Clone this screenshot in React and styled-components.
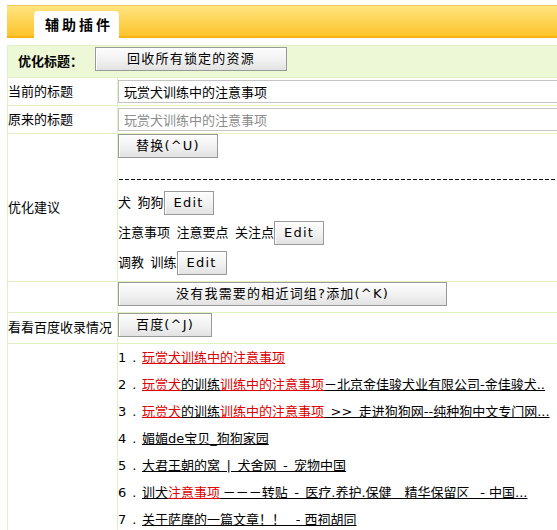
import React from "react";
import styled, { createGlobalStyle } from "styled-components";

const FONT = `"DejaVu Sans", "Noto Sans CJK SC", sans-serif`;
const LINE = "#e0f1c3";
const RED = "#dc0000";

const Global = createGlobalStyle`
  html, body { margin: 0; padding: 0; background: #fff; overflow: hidden; }
  body { font-family: ${FONT}; font-size: 13px; color: #000; }
`;

const Page = styled.div`
  padding: 5px 0 0 7px;
  overflow: hidden;
`;

const Band = styled.div`
  height: 30px;
  border-top: 1px solid #f2c65a;
  border-bottom: 2px solid #f9b312;
  background: linear-gradient(#ffe580, #fdc32c);
  display: flex;
  align-items: flex-end;
`;

const Tab = styled.div`
  margin-left: 27px;
  margin-bottom: -2px;
  width: 85px;
  height: 27px;
  box-sizing: border-box;
  padding-left: 11px;
  background: #fff;
  border-radius: 4px 4px 0 0;
  font-family: "Noto Sans CJK SC", sans-serif;
  font-weight: bold;
  font-size: 14px;
  letter-spacing: 3px;
  line-height: 27px;
`;

const Panel = styled.div`
  margin-top: 7px;
  border-top: 1px solid ${LINE};
  border-left: 1px solid ${LINE};
`;

const TitleRow = styled.div`
  display: flex;
  align-items: flex-start;
  height: 31px;
  padding-left: 10px;
  background: #edf8d6;
  border-bottom: 1px solid ${LINE};
`;

const TitleLabel = styled.span`
  font-family: "Noto Sans CJK SC", sans-serif;
  font-weight: bold;
  line-height: 30px;
  margin-right: 12px;
`;

const Row = styled.div`
  display: grid;
  grid-template-columns: 110px minmax(0, 1fr);
  height: ${(p) => (p.$h ? `${p.$h}px` : "auto")};
  border-bottom: 1px solid ${LINE};
`;

const Label = styled.div`
  box-sizing: border-box;
  border-right: 1px solid ${LINE};
  display: flex;
  align-items: center;
  white-space: nowrap;
  line-height: 18px;
`;

const Cell = styled.div`
  display: flex;
  flex-direction: column;
  align-items: flex-start;
  justify-content: ${(p) => (p.$center ? "center" : "flex-start")};
  min-width: 0;
  overflow: hidden;
`;

const TextBox = styled.input`
  width: calc(100% + 20px);
  height: 23px;
  box-sizing: border-box;
  margin: 0;
  padding: 0 5px;
  border: 1px solid #c4c4c4;
  background: #fff;
  font-family: ${FONT};
  font-size: 13px;
  color: ${(p) => (p.$muted ? "#8c8c8c" : "#000")};
  outline: none;
`;

const Btn = styled.button`
  flex: none;
  width: ${(p) => p.$w}px;
  height: 24px;
  box-sizing: border-box;
  margin: ${(p) => p.$mt || 0}px 0 0 0;
  padding: 0;
  border: 1px solid #999;
  background: linear-gradient(#fdfdfd 0%, #f1f1f1 55%, #e2e2e2 100%);
  box-shadow: inset 1px 1px 0 #fff;
  font-family: ${FONT};
  font-size: 13px;
  letter-spacing: 1.2px;
  line-height: 22px;
  color: #000;
  text-align: center;
  white-space: nowrap;
`;

const Dashes = styled.div`
  align-self: stretch;
  margin: 21px 0 0 1px;
  height: 1px;
  background: repeating-linear-gradient(90deg, #111 0 4px, transparent 4px 6px);
`;

const WordLine = styled.div`
  display: flex;
  align-items: center;
  height: 30px;
  margin-top: ${(p) => p.$mt || 0}px;
  white-space: pre;
  line-height: 18px;
`;

const List = styled.div`
  display: flex;
  flex-direction: column;
  min-width: 0;
  overflow: hidden;
`;

const Item = styled.div`
  height: 27px;
  line-height: 27px;
  white-space: pre;
`;

const Num = styled.span`
  display: inline-block;
  width: 24px;
`;

const Dot = styled.span`
  margin-left: 6px;
`;

const Seg = styled.span`
  color: ${(p) => (p.$red ? RED : "#000")};
  text-decoration: underline;
  text-decoration-color: ${(p) => (p.$red ? RED : "#000")};
`;

const r = (t) => ({ t, red: true });
const b = (t) => ({ t, red: false });

const items = [
  [r("玩赏犬训练中的注意事项")],
  [r("玩赏犬"), b("的训练"), r("训练中的注意事项"), b("－北京金佳骏犬业有限公司-金佳骏犬..")],
  [r("玩赏犬"), b("的训练"), r("训练中的注意事项"), b("\u2002>>\u2002走进狗狗网--纯种狗中文专门网...")],
  [b("媚媚de宝贝_狗狗家园")],
  [b("大君王朝的窝\u2002|\u2002犬舍网\u2002-\u2002宠物中国")],
  [b("训犬"), r("注意事项"), b("\u2009－－－转贴\u2002-\u2002医疗.养护.保健\u2002\u2002精华保留区\u2002 - 中国...")],
  [b("关于萨摩的一篇文章！！\u2002 - 西祠胡同")],
];

const words = [
  { text: "犬\u2002狗狗", mt: 8 },
  { text: "注意事项\u2002注意要点\u2002关注点", mt: 0 },
  { text: "调教\u2002训练", mt: 0 },
];

export default function App() {
  return (
    <>
      <Global />
      <Page>
        <Band>
          <Tab>辅助插件</Tab>
        </Band>
        <Panel>
          <TitleRow>
            <TitleLabel>优化标题：</TitleLabel>
            <Btn $w={192} $mt={1}>回收所有锁定的资源</Btn>
          </TitleRow>
          <Row $h={27}>
            <Label>当前的标题</Label>
            <Cell $center>
              <TextBox readOnly value="玩赏犬训练中的注意事项" />
            </Cell>
          </Row>
          <Row $h={27}>
            <Label>原来的标题</Label>
            <Cell $center>
              <TextBox readOnly $muted value="玩赏犬训练中的注意事项" />
            </Cell>
          </Row>
          <Row $h={147}>
            <Label>优化建议</Label>
            <Cell>
              <Btn $w={100}>替换(^U)</Btn>
              <Dashes />
              {words.map((w, i) => (
                <WordLine key={i} $mt={w.mt}>
                  {w.text}
                  <Btn $w={50}>Edit</Btn>
                </WordLine>
              ))}
            </Cell>
          </Row>
          <Row $h={30}>
            <Label />
            <Cell>
              <Btn $w={329}>没有我需要的相近词组?添加(^K)</Btn>
            </Cell>
          </Row>
          <Row $h={30}>
            <Label>看看百度收录情况</Label>
            <Cell>
              <Btn $w={94}>百度(^J)</Btn>
            </Cell>
          </Row>
          <Row>
            <Label />
            <List>
              {items.map((segs, i) => (
                <Item key={i}>
                  <Num>
                    {i + 1}
                    <Dot>.</Dot>
                  </Num>
                  {segs.map((s, j) => (
                    <Seg key={j} $red={s.red}>
                      {s.t}
                    </Seg>
                  ))}
                </Item>
              ))}
            </List>
          </Row>
        </Panel>
      </Page>
    </>
  );
}
